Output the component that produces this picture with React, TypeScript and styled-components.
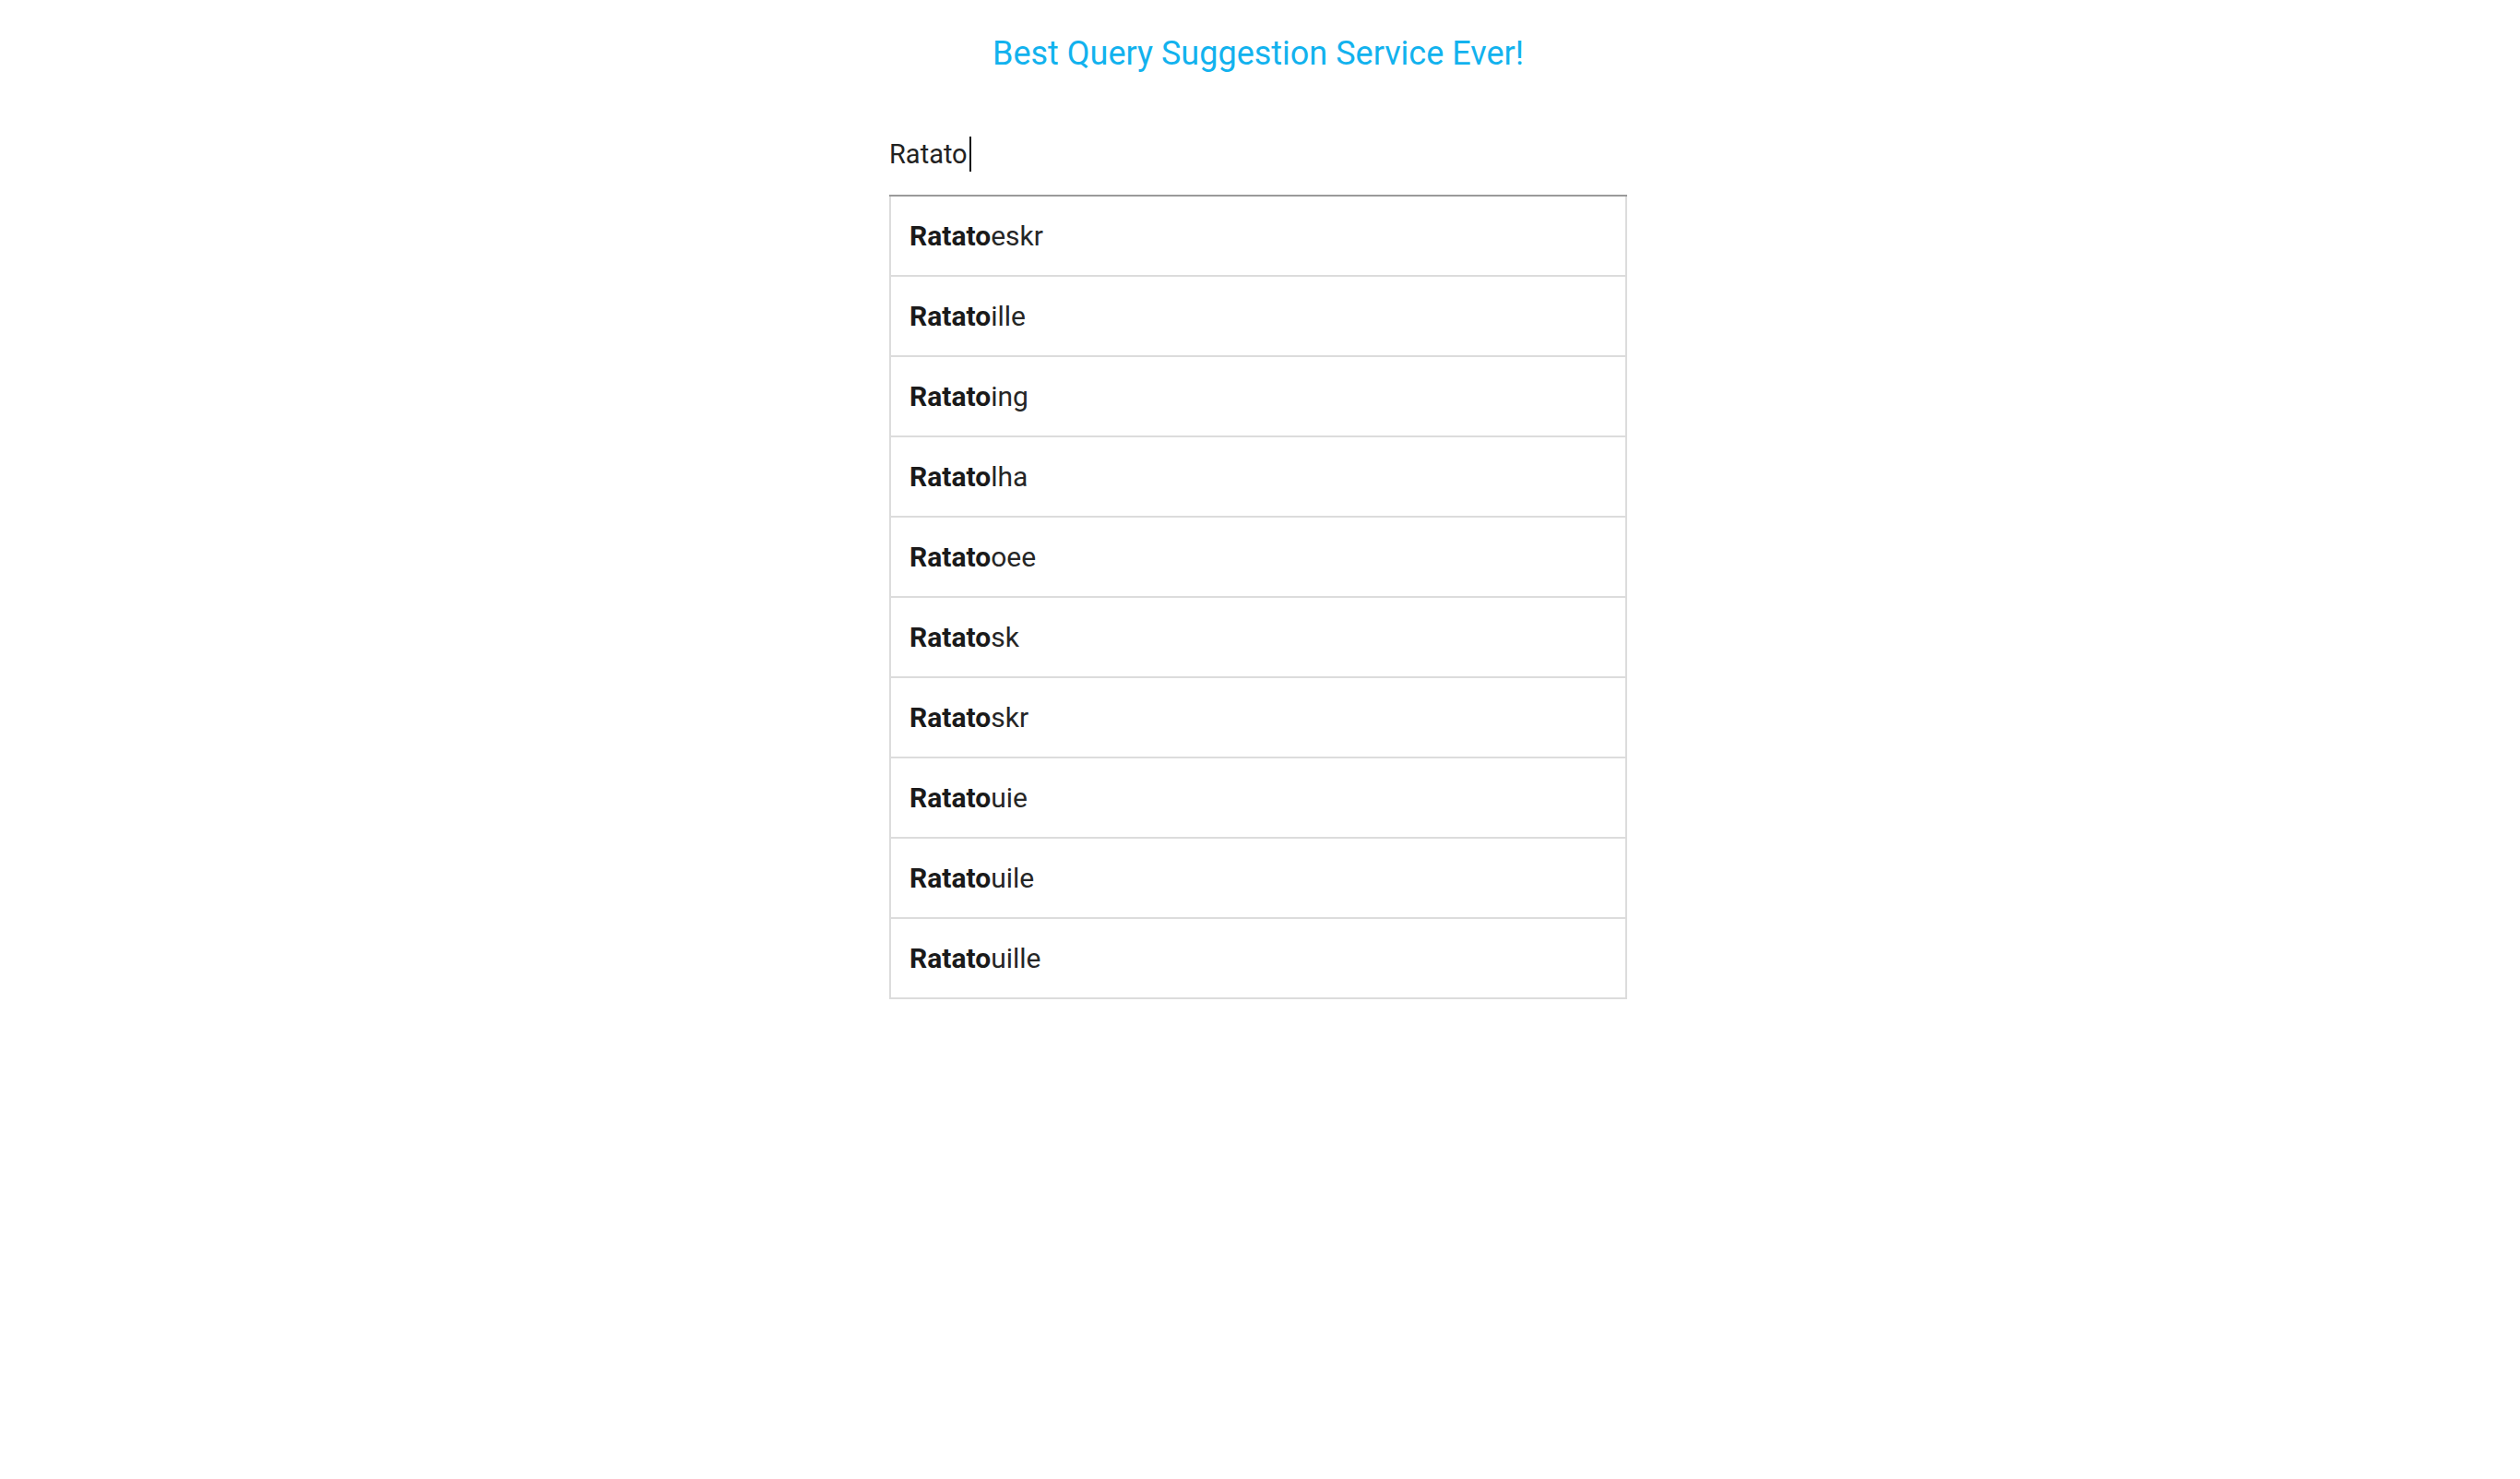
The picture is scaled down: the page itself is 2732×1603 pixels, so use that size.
import React from 'react';
import styled, {createGlobalStyle} from 'styled-components';

const GlobalStyle = createGlobalStyle`
  html, body {
    margin: 0;
    padding: 0;
    background: #fff;
    font-family: Roboto, "Liberation Sans", sans-serif;
  }
`;

const Page = styled.main`
  display: flex;
  flex-direction: column;
  align-items: center;
  padding-right: 4px;
`;

const Title = styled.h1`
  margin: 0;
  padding-top: 33px;
  height: 50px;
  font-size: 36px;
  font-weight: 400;
  line-height: 50px;
  color: #12b2ee;
`;

const Search = styled.section`
  width: 800px;
  display: flex;
  flex-direction: column;
  margin-top: 36px;
`;

const InputBox = styled.div`
  height: 94px;
  display: flex;
  align-items: center;
  padding-top: 4px;
  box-sizing: border-box;
  font-size: 29px;
  color: #222;
  border-bottom: 2px solid #9a9a9a;
`;

const Caret = styled.span`
  display: inline-block;
  width: 2px;
  height: 38px;
  margin-left: 2px;
  background: #111;
`;

const List = styled.ul`
  list-style: none;
  margin: 0;
  padding: 0;
  border: 2px solid #dcdcdc;
  border-top: none;
`;

const Item = styled.li`
  height: 85px;
  display: flex;
  align-items: center;
  padding: 0 20px;
  font-size: 30px;
  color: #262626;
  & + & {
    border-top: 2px solid #dcdcdc;
  }
  b {
    font-weight: 700;
    color: #1a1a1a;
  }
`;

const query = 'Ratato';
const suggestions = [
  'eskr',
  'ille',
  'ing',
  'lha',
  'oee',
  'sk',
  'skr',
  'uie',
  'uile',
  'uille',
];

export default function App() {
  return (
    <>
      <GlobalStyle />
      <Page>
        <Title>Best Query Suggestion Service Ever!</Title>
        <Search>
          <InputBox>
            {query}
            <Caret />
          </InputBox>
          <List>
            {suggestions.map((rest) => (
              <Item key={rest}>
                <b>{query}</b>
                {rest}
              </Item>
            ))}
          </List>
        </Search>
      </Page>
    </>
  );
}
